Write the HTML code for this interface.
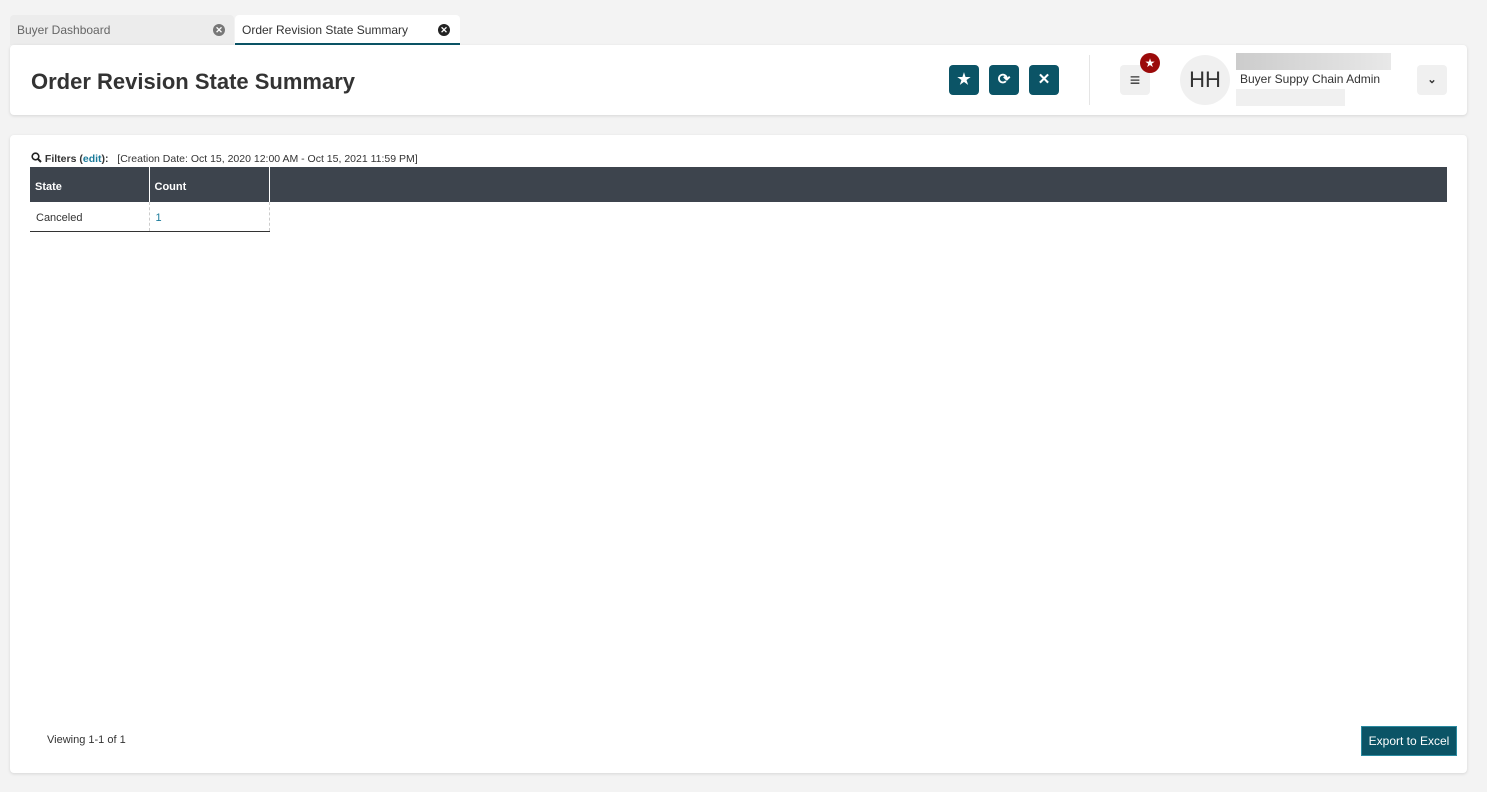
<!DOCTYPE html>
<html><head><meta charset="utf-8"><style>
*{box-sizing:border-box;margin:0;padding:0}
body{width:1487px;height:792px;background:#f3f3f3;font-family:"Liberation Sans",sans-serif;position:relative;overflow:hidden;color:#333}
.tab{position:absolute;top:15px;height:30px;border-radius:4px 4px 0 0;font-size:12px;line-height:31px;padding-left:7px}
.t1{left:10px;width:224px;background:#ececec;color:#666;}
.t2{left:235px;width:225px;background:#fff;color:#333;border-bottom:2px solid #0b5466}
.x{position:absolute;top:9px;width:12px;height:12px;border-radius:50%;color:#fff;font-size:9px;line-height:12px;text-align:center;font-weight:bold}
.card{position:absolute;background:#fff;border-radius:4px;box-shadow:0 1px 3px rgba(0,0,0,.12)}
h1{position:absolute;left:21px;top:24px;font-size:22px;font-weight:bold;color:#333}
.btn{position:absolute;top:20px;width:30px;height:30px;background:#0b5466;border-radius:4px;color:#fff;text-align:center;line-height:30px;font-size:15px;font-weight:bold}
table{border-collapse:collapse;font-size:11px}
</style></head><body>
<div class="tab t1">Buyer Dashboard<span class="x" style="left:203px;background:#777">✕</span></div>
<div class="tab t2">Order Revision State Summary<span class="x" style="left:203px;background:#222">✕</span></div>
<div class="card" style="left:10px;top:45px;width:1457px;height:70px">
<h1>Order Revision State Summary</h1>
<div class="btn" style="left:939px">★</div>
<div class="btn" style="left:979px">⟳</div>
<div class="btn" style="left:1019px">✕</div>
<div style="position:absolute;left:1079px;top:10px;width:1px;height:50px;background:#e5e5e5"></div>
<div style="position:absolute;left:1110px;top:20px;width:30px;height:30px;background:#f0f0f0;border-radius:4px;text-align:center;line-height:30px;font-size:18px;font-weight:bold">≡</div>
<div style="position:absolute;left:1130px;top:8px;width:20px;height:20px;background:#9b0a0a;border-radius:50%;color:#fff;text-align:center;line-height:20px;font-size:12px">★</div>
<div style="position:absolute;left:1170px;top:10px;width:50px;height:50px;background:#f0f0f0;border-radius:50%;text-align:center;line-height:50px;font-size:22px;color:#333">HH</div>
<div style="position:absolute;left:1226px;top:8px;width:155px;height:17px;background:linear-gradient(90deg,#ccc,#e8e8e8)"></div>
<div style="position:absolute;left:1230px;top:27px;font-size:12px">Buyer Suppy Chain Admin</div>
<div style="position:absolute;left:1226px;top:44px;width:109px;height:17px;background:#f0f0f0"></div>
<div style="position:absolute;left:1407px;top:20px;width:30px;height:30px;background:#f0f0f0;border-radius:4px;text-align:center;line-height:30px;font-size:11px;font-weight:bold">⌄</div>
</div>
<div class="card" style="left:10px;top:135px;width:1457px;height:638px">
<div style="position:absolute;left:21px;top:17px;font-size:10.5px;color:#333"><svg width="11" height="11" viewBox="0 0 11 11" style="vertical-align:-1px"><circle cx="4.5" cy="4.5" r="3.3" fill="none" stroke="#222" stroke-width="1.6"/><path d="M7 7L10 10" stroke="#222" stroke-width="2"/></svg> <b>Filters (<span style="color:#1a7a9a">edit</span>):</b>&nbsp;&nbsp; [Creation Date: Oct 15, 2020 12:00 AM - Oct 15, 2021 11:59 PM]</div>
<div style="position:absolute;left:20px;top:32px;width:1417px;height:35px;background:#3d444d"></div>
<table style="position:absolute;left:20px;top:32px">
<tr style="height:35px;color:#fff;font-weight:bold"><td style="width:119px;padding-left:5px;padding-top:4px;border-right:1px solid #fff">State</td><td style="width:120px;padding-left:5px;padding-top:4px;border-right:1px solid #fff">Count</td></tr>
<tr style="height:29px;border-bottom:1px solid #333"><td style="padding-left:6px;padding-top:3px;border-right:1px dashed #ccc">Canceled</td><td style="padding-left:6px;padding-top:3px;color:#1a7a9a;border-right:1px dashed #ccc">1</td></tr>
</table>
<div style="position:absolute;left:37px;top:599px;font-size:11px">Viewing 1-1 of 1</div>
<div style="position:absolute;left:1351px;top:591px;width:96px;height:30px;background:#0b5466;border:1px solid #2a8aa0;color:#fff;font-size:12px;text-align:center;line-height:28px">Export to Excel</div>
</div>
</body></html>
